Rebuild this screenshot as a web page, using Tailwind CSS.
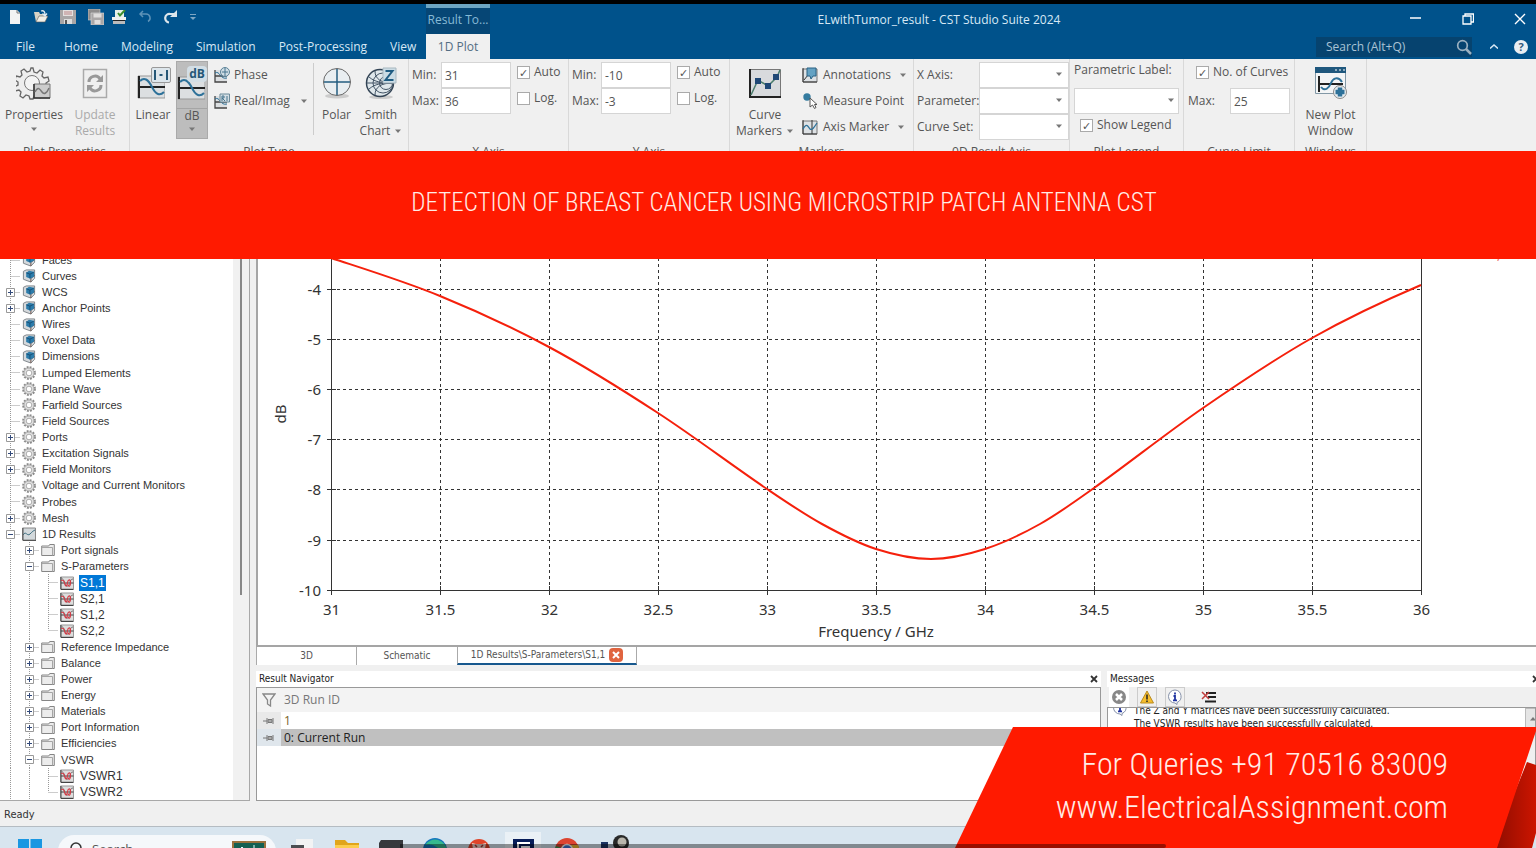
<!DOCTYPE html>
<html lang="en">
<head>
    <meta charset="UTF-8">
    <meta name="viewport" content="width=device-width, initial-scale=1.0">
    <title>ELwithTumor_result - CST Studio Suite 2024</title>
    <script src="https://cdn.jsdelivr.net/npm/@tailwindcss/browser@4"></script>
</head>
<body class="relative flex h-screen flex-col overflow-hidden bg-[#f0f0f0] font-['Open_Sans','Noto_Sans',sans-serif] text-xs text-[#555]">
    <!-- Shared icons -->
    <svg class="hidden">
        <symbol id="caret" viewBox="0 0 8 5"><path d="M1 .5h6L4 4z" fill="#777"/></symbol>
        <symbol id="cube" viewBox="0 0 14 15">
            <path d="M1 2.500l3-1.500h9v9l-4 4-8-3z" fill="#d5d9dc" stroke="#7b8186"/>
            <path d="M9 14v-4l4-3" fill="none" stroke="#6b4b42"/>
            <path d="M4 4l3-2 5.500 1v5l-4 2.500L4 8.500z" fill="#2c7cab"/>
            <path d="M4 4l4 1.500 4-2M8 5.500V10" fill="none" stroke="#174f75"/>
        </symbol>
        <symbol id="gear" viewBox="0 0 14 14">
            <circle cx="7" cy="7" r="6" fill="none" stroke="#8a8a8a" stroke-width="1.800" stroke-dasharray="1.900 1.240"/>
            <circle cx="7" cy="7" r="5" fill="#e2e2e2" stroke="#999" stroke-width=".8"/>
            <circle cx="7" cy="7" r="2.800" fill="#fff" stroke="#999" stroke-width=".8"/>
        </symbol>
        <symbol id="result" viewBox="0 0 14 14">
            <path d="M.5 1h13v12H.5z" fill="#d3d9dc" stroke="#888"/>
            <path d="M1 8c3-5 4 2 7-1s3-3 5-4" fill="none" stroke="#3d6e80"/>
            <path d="M1 1v12.500h13" fill="none" stroke="#555"/>
        </symbol>
        <symbol id="folder" viewBox="0 0 14 14">
            <path d="M.7 12.500V3h7l1-1.500h4.600v11z" fill="#ececec" stroke="#858585"/>
            <path d="M1 4.500h10.500v8" fill="none" stroke="#a5a5a5"/>
        </symbol>
        <symbol id="curve" viewBox="0 0 14 14">
            <path d="M.5 1h13v12H.5z" fill="#ddd" stroke="#999"/>
            <path d="M1 7h12.500M1 1v12.500h12.500" fill="none" stroke="#444"/>
            <path d="M1 3c4-2 3 9 7 7 3-1 1-7 5-7" fill="none" stroke="#777"/>
            <path d="M1 4.500c3-1 3 1 4 4s2 1 2.500-2 3-4 3 0-1.500 5-2.500 2" fill="none" stroke="#d33c46" stroke-width="1.200"/>
        </symbol>
        <symbol id="wave" viewBox="0 0 28 24">
            <path d="M1 1h27v22H1z" fill="#dcdfe1" stroke="#999"/>
            <path d="M2 1v22M2 12h26" stroke="#222" stroke-width="2" fill="none"/>
            <path d="M3 6c4-4 8-2 12 6s8 9 12 5" stroke="#2d7199" stroke-width="2" fill="none"/>
        </symbol>
        <symbol id="pin" viewBox="0 0 12 8"><path d="M0 4h4M4 1v6M5 2.500h4v3H5zM10 1v6" stroke="#777" fill="#aaa"/></symbol>
        <symbol id="info" viewBox="0 0 16 16">
            <path d="M8 1a6.500 6.500 0 1 0 0 13l2 1.500v-2A6.500 6.500 0 0 0 8 1z" fill="#fff" stroke="#8490a8"/>
            <path d="M8 3.500v2M6.500 7H8v4M6 11.300h4" stroke="#2034a0" stroke-width="1.800" fill="none"/>
        </symbol>
    </svg>

    <!-- Title bar and ribbon tabs -->
    <header class="shrink-0 border-t-4 border-black bg-[#00528b] text-[#d7e8f5]">
        <div class="flex h-[30px]">
            <div class="flex w-[426px] items-center gap-3 pb-1 pl-2">
                <button aria-label="New"><svg class="size-3.5" viewBox="0 0 14 14"><path d="M2 0h7l3 3v11H2z" fill="#f3f3f3"/><path d="M9 0v3h3" fill="none" stroke="#777"/></svg></button>
                <button aria-label="Open"><svg class="size-3.5" viewBox="0 0 14 14"><path d="M0 2h5l1 2h5v8H2z" fill="#d8d3c5"/><path d="M2 12l3-6h9l-3 6z" fill="#f3efe6" stroke="#555" stroke-width=".6"/><path d="M7 1c3-1 4 1 4 4M8.500 3.500L11 6l2-2.500" fill="none" stroke="#dfeaf2" stroke-width="1.300"/></svg></button>
                <button aria-label="Save"><svg class="size-4" viewBox="0 0 16 16"><path d="M0 1h16v14H0z" fill="#a9a6a6"/><path d="M3 1h10v6H3z" fill="#e4e0df"/><path d="M4 10h8v5H4z" fill="#ddd"/><path d="M4 3h8M4 5h8" stroke="#b88"/><path d="M6 11v4" stroke="#555" stroke-width="2"/></svg></button>
                <button aria-label="Save all"><svg class="size-4" viewBox="0 0 16 16"><path d="M0 0h12v11H0z" fill="#8f8d8d" stroke="#ccc" stroke-width=".6"/><path d="M3 4h13v12H3z" fill="#aaa7a7" stroke="#ddd" stroke-width=".6"/><path d="M5.500 4.500h8v4h-8zM6.500 11h6v4h-6z" fill="#e0dedd"/></svg></button>
                <button aria-label="Print" class="-ml-1"><svg class="size-3.5" viewBox="0 0 14 14"><path d="M3 0h9v7H3z" fill="#e8f0e8"/><path d="M0 7h14v3H0z" fill="#f0f0f0"/><path d="M1 11h12v3H1z" fill="#bbb"/><path d="M1 10.500h12" stroke="#222"/><path d="M6 3l2 2.500L13 0" stroke="#3c8c2e" stroke-width="2" fill="none"/></svg></button>
                <button aria-label="Undo"><svg class="size-3.5" viewBox="0 0 14 14"><path d="M5 1L2 4l3 3M2 4h6a4 4 0 0 1 2 7.500" fill="none" stroke="#5d93b8" stroke-width="1.500"/></svg></button>
                <button aria-label="Redo"><svg class="size-3.5" viewBox="0 0 14 14"><path d="M10 4H6a4 4 0 0 0-1 8.500" fill="none" stroke="#dce6ec" stroke-width="2.200"/><path d="M13 0v7H6z" fill="#dce6ec"/></svg></button>
                <button aria-label="Customize"><svg class="w-1.5" viewBox="0 0 6 8"><path d="M0 1.500h6" stroke="#7ea6c3"/><path d="M0 4h6L3 7z" fill="#7ea6c3"/></svg></button>
            </div>
            <div class="w-16 border-t-4 border-[#6da5c2] bg-[#064675] text-center leading-6 text-[#86bad6]">Result To...</div>
            <h1 class="flex-1 text-center leading-8">ELwithTumor_result - CST Studio Suite 2024</h1>
            <div class="flex w-[148px] items-center justify-end gap-10 pr-2.5">
                <button aria-label="Minimize"><svg class="size-3" viewBox="0 0 12 12"><path d="M0 5h11" stroke="#fff" stroke-width="1.500"/></svg></button>
                <button aria-label="Restore"><svg class="size-3" viewBox="0 0 12 12"><path d="M1 3h8v8H1zM3 3V1h8.500v8H9" fill="none" stroke="#fff" stroke-width="1.300"/></svg></button>
                <button aria-label="Close"><svg class="size-3" viewBox="0 0 12 12"><path d="M1 1l10 10M11 1L1 11" stroke="#fff" stroke-width="1.400"/></svg></button>
            </div>
        </div>
        <div class="flex h-[25px] items-center">
            <nav class="flex w-[426px] gap-[23px] pl-4 whitespace-nowrap">
                <a href="#">File</a><a class="ml-1.5" href="#">Home</a><a href="#">Modeling</a><a href="#">Simulation</a><a href="#">Post-Processing</a><a href="#">View</a>
            </nav>
            <a href="#" class="w-16 bg-[#f0f0f0] text-center leading-[25px] text-[#536d83]">1D Plot</a>
            <div class="flex flex-1 items-center justify-end">
                <label class="flex h-5 w-[156px] items-center bg-[#06436f] pl-1.5">
                    <input type="search" aria-label="Search" placeholder="Search (Alt+Q)" class="w-32 flex-1 bg-transparent pl-1 outline-none placeholder:text-[#a9c3d6]">
                    <svg class="size-4" viewBox="0 0 16 16"><circle cx="6.500" cy="6.500" r="4.800" fill="none" stroke="#9bb1c1" stroke-width="1.700"/><path d="M10 10l5 5" stroke="#9bb1c1" stroke-width="2.500"/></svg>
                </label>
                <button aria-label="Collapse ribbon" class="mr-4 ml-[18px]"><svg class="w-2" viewBox="0 0 8 5"><path d="M0 4.500L4 1l4 3.500" fill="none" stroke="#d7e8f5" stroke-width="1.500"/></svg></button>
                <button aria-label="Help" class="mr-2 size-3.5 rounded-full bg-[#e9eef2] text-[11px] leading-[14px] font-bold text-[#31597a]">?</button>
            </div>
        </div>
    </header>

    <!-- Ribbon -->
    <div class="flex h-[101px] shrink-0 whitespace-nowrap">
        <section class="flex w-[130px] flex-col border-r border-[#d9d9d9]">
            <div class="flex h-[86px] justify-between px-1.5 pt-1.5">
                <button class="flex w-14 flex-col items-center leading-4">
                    <svg class="mb-1.5 size-9" viewBox="0 0 36 36">
                        <path d="M17 3l1 4 3 1 3-3 3 2-1 4 2 2 4-1 1 4-3 2v3l3 2-1 3-4-1-2 3 1 3-3 2-3-3-3 1-1 3h-3l-1-3-3-1-3 3-3-2 1-4-2-2-4 1-1-4 4-2v-3l-3-2 1-4 4 1 2-2-1-4 3-2 3 3 3-1 1-3z" fill="#eee" stroke="#666" stroke-width="1.300"/>
                        <circle cx="16" cy="18" r="7.500" fill="#f4f4f4" stroke="#777"/>
                        <path d="M18 19h16v14H18z" fill="#ccc" stroke="#777"/><path d="M18 19v14h16" fill="none" stroke="#333" stroke-width="1.500"/><path d="M19 27c3-6 5-3 7 0s5 1 7-4" fill="none" stroke="#777" stroke-width="1.500"/>
                    </svg>
                    Properties<svg class="mt-1 w-2" viewBox="0 0 8 5"><use href="#caret"/></svg>
                </button>
                <button disabled class="flex w-14 flex-col items-center leading-4 text-[#aaa]">
                    <svg class="mb-1.5 size-9" viewBox="0 0 36 36">
                        <path d="M6.500 4.500h23v28h-23z" fill="#efefef" stroke="#aaa" stroke-width="1.500"/>
                        <path d="M12 17c0-6 8-8 11-3M24 20c0 6-8 8-11 3" fill="none" stroke="#999" stroke-width="3"/><path d="M26 10v7h-7zM10 27v-7h7z" fill="#999"/>
                    </svg>
                    Update<br>Results
                </button>
            </div>
            <p class="text-center leading-4">Plot Properties</p>
        </section>

        <section class="flex w-[279px] flex-col border-r border-[#d9d9d9]">
            <div class="flex h-[86px]">
                <button class="flex w-[46px] flex-col items-center pt-2 leading-4">
                    <span class="relative mb-1 block h-9 w-9">
                        <svg class="absolute bottom-1 left-0.5 h-6 w-7"><use href="#wave"/></svg>
                        <svg class="absolute top-0 right-0 h-4 w-5" viewBox="0 0 20 16"><rect x=".5" y=".5" width="19" height="15" rx="1.500" fill="#dde6ec" stroke="#999"/><path d="M4 3v10M16 3v10M8.500 8h3" stroke="#255777" stroke-width="2"/></svg>
                    </span>
                    Linear
                </button>
                <button class="mt-0.5 flex h-[78px] w-8 flex-col items-center self-start border border-[#aaa] bg-[#bdbdbd] pt-2 leading-4">
                    <span class="relative mb-1 block h-[34px] w-[30px]">
                        <svg class="absolute bottom-1 left-0 h-6 w-7"><use href="#wave"/></svg>
                        <span class="absolute -top-1 right-0 h-4 w-5 rounded-sm bg-[#d3dee5] text-center text-xs leading-4 font-bold text-[#255777]">dB</span>
                    </span>
                    <span class="w-full border-t border-[#a5a5a5] leading-[14px]">dB</span><svg class="mt-1 w-2" viewBox="0 0 8 5"><use href="#caret"/></svg>
                </button>
                <div class="flex w-[105px] flex-col gap-1 pt-[5px] pl-1.5">
                    <button class="flex h-[22px] items-center gap-1">
                        <svg class="size-4" viewBox="0 0 16 16"><path d="M1 3h12v12H1z" fill="#dcdfe1"/><path d="M1 3v12h12M1 9h12" stroke="#444" fill="none" stroke-width="1.300"/><path d="M1 6c5-3 5 7 12 5" stroke="#2d7199" fill="none"/><circle cx="11" cy="5" r="4.500" fill="#cfdde5" stroke="#5a8095"/><path d="M8 5h6M11 1v8" stroke="#46758e"/></svg>Phase
                    </button>
                    <button class="flex h-[22px] items-center gap-1">
                        <svg class="size-4 shrink-0" viewBox="0 0 16 16"><path d="M1 3h12v12H1z" fill="#dcdfe1"/><path d="M1 3v12h12M1 9h12" stroke="#444" fill="none" stroke-width="1.300"/><path d="M1 6c5-3 5 7 12 5" stroke="#2d7199" fill="none"/><path d="M6 1h9.500v8H6z" fill="#d3dde3" stroke="#6d8b9b"/><path d="M8 8V3h2v2H8l3 3M13 3v5" stroke="#46758e" fill="none"/></svg>Real/Imag
                        <svg class="ml-1.5 w-2 shrink-0" viewBox="0 0 8 5"><use href="#caret"/></svg>
                    </button>
                </div>
                <div class="mt-1 h-[72px] w-px bg-[#ccc]"></div>
                <button class="flex w-[45px] flex-col items-center pt-2 leading-4">
                    <svg class="mb-2 size-8" viewBox="0 0 32 32"><ellipse cx="16" cy="29" rx="12" ry="2.500" fill="#ccc"/><circle cx="16" cy="15" r="13.500" fill="#e9eef1" stroke="#666"/><path d="M16 2v26M3 15h26" stroke="#245d80" stroke-width="1.500"/></svg>
                    Polar
                </button>
                <button class="flex w-[44px] flex-col items-center pt-2 leading-4">
                    <svg class="mb-2 size-8" viewBox="0 0 32 32"><ellipse cx="16" cy="30" rx="12" ry="2" fill="#ccc"/><circle cx="15" cy="16" r="13.500" fill="#dfe7eb" stroke="#345" stroke-width="1.500"/><circle cx="18" cy="16" r="10" fill="none" stroke="#456"/><circle cx="21" cy="16" r="6.500" fill="none" stroke="#456"/><path d="M2 16h26M10 4c0 8 6 12 18 12M10 28c0-8 6-12 18-12M4 10c6 5 12 6 24 6M4 22c6-5 12-6 24-6" fill="none" stroke="#456"/><path d="M18 1h13v15H18z" fill="#cbdce5" stroke="#a9b8c0"/><path d="M20.500 4h7l-7 9h8" fill="none" stroke="#1f5c82" stroke-width="2"/></svg>
                    Smith
                    <span class="flex items-center gap-1">Chart<svg class="w-2" viewBox="0 0 8 5"><use href="#caret"/></svg></span>
                </button>
            </div>
            <p class="text-center leading-4">Plot Type</p>
        </section>

        <section class="flex w-[160px] flex-col border-r border-[#d9d9d9]">
            <div class="grid h-[86px] grid-cols-[27px_70px_1fr] content-start items-center gap-x-0.5 pt-[3px] pl-[3px]">
                <label for="xmin">Min:</label>
                <input id="xmin" value="31" class="h-[26px] w-full border border-[#d5d5d5] bg-white px-[3px]">
                <label class="mb-1.5 flex items-center gap-1 pl-1"><input type="checkbox" checked class="grid size-[13px] appearance-none place-items-center border border-[#aaa] bg-white checked:before:text-[11px] checked:before:leading-none checked:before:content-['✓']">Auto</label>
                <label for="xmax">Max:</label>
                <input id="xmax" value="36" class="h-[26px] w-full border border-[#d5d5d5] bg-white px-[3px]">
                <label class="mb-1.5 flex items-center gap-1 pl-1"><input type="checkbox" class="size-[13px] appearance-none border border-[#aaa] bg-white">Log.</label>
            </div>
            <p class="text-center leading-4">X Axis</p>
        </section>

        <section class="flex w-[161px] flex-col border-r border-[#d9d9d9]">
            <div class="grid h-[86px] grid-cols-[27px_70px_1fr] content-start items-center gap-x-0.5 pt-[3px] pl-[3px]">
                <label for="ymin">Min:</label>
                <input id="ymin" value="-10" class="h-[26px] w-full border border-[#d5d5d5] bg-white px-[3px]">
                <label class="mb-1.5 flex items-center gap-1 pl-1"><input type="checkbox" checked class="grid size-[13px] appearance-none place-items-center border border-[#aaa] bg-white checked:before:text-[11px] checked:before:leading-none checked:before:content-['✓']">Auto</label>
                <label for="ymax">Max:</label>
                <input id="ymax" value="-3" class="h-[26px] w-full border border-[#d5d5d5] bg-white px-[3px]">
                <label class="mb-1.5 flex items-center gap-1 pl-1"><input type="checkbox" class="size-[13px] appearance-none border border-[#aaa] bg-white">Log.</label>
            </div>
            <p class="text-center leading-4">Y Axis</p>
        </section>

        <section class="flex w-[184px] flex-col border-r border-[#d9d9d9]">
            <div class="flex h-[86px]">
                <button class="flex w-[70px] flex-col items-center pt-2 leading-4">
                    <svg class="mb-2 size-8" viewBox="0 0 32 32"><path d="M.5 2.500h31v27H.5z" fill="#d8dadd" stroke="#777"/><path d="M1 2v28h31" fill="none" stroke="#222" stroke-width="2"/><path d="M2 28L9 13l10 6 9-9 3-7" fill="none" stroke="#4a7c6c" stroke-width="1.500"/><path d="M6 11h6v6H6zM16 16h6v6h-6zM24 7h6v6h-6z" fill="#1f4876"/></svg>
                    Curve
                    <span class="flex items-center gap-1">Markers<svg class="w-2" viewBox="0 0 8 5"><use href="#caret"/></svg></span>
                </button>
                <div class="flex flex-1 flex-col gap-1 pt-[5px] pr-1.5 pl-0.5">
                    <button class="flex h-[22px] items-center gap-[5px]">
                        <svg class="size-4" viewBox="0 0 16 16"><path d="M1 2h14v13H1z" fill="#dde1e4" stroke="#777"/><path d="M1 1v14h14M2 13L6 8" fill="none" stroke="#333"/><path d="M5 1h9v8h-3l-2 3-1-3H5z" fill="#64a2c3" stroke="#2b6385"/></svg>Annotations<svg class="ml-auto w-2" viewBox="0 0 8 5"><use href="#caret"/></svg>
                    </button>
                    <button class="flex h-[22px] items-center gap-[5px]">
                        <svg class="size-4" viewBox="0 0 16 16"><circle cx="5" cy="4" r="3.700" fill="#357b9f"/><path d="M8 5v9l2.500-2 2 3.500 1.500-1-1.500-3H15z" fill="#fff" stroke="#555"/></svg>Measure Point
                    </button>
                    <button class="flex h-[22px] items-center gap-[5px]">
                        <svg class="size-4" viewBox="0 0 16 16"><path d="M1 2h14v13H1z" fill="#dde1e4" stroke="#777"/><path d="M1 1v14h14M10 1v14" fill="none" stroke="#333"/><path d="M1 10c4-7 5-2 7 0s5-3 7-6" fill="none" stroke="#2d7199" stroke-width="1.300"/></svg>Axis Marker<svg class="mr-0.5 ml-auto w-2" viewBox="0 0 8 5"><use href="#caret"/></svg>
                    </button>
                </div>
            </div>
            <p class="text-center leading-4">Markers</p>
        </section>

        <section class="flex w-[156px] flex-col border-r border-[#d9d9d9]">
            <div class="grid h-[86px] grid-cols-[1fr_90px] content-start items-center pt-[3px] pr-0.5 pl-[3px]">
                <label for="ax">X Axis:</label>
                <div class="relative"><select id="ax" class="block h-[26px] w-full appearance-none border border-[#d5d5d5] bg-white"></select><svg class="pointer-events-none absolute top-2.5 right-1.5 w-2" viewBox="0 0 8 5"><use href="#caret"/></svg></div>
                <label for="param">Parameter:</label>
                <div class="relative"><select id="param" class="block h-[26px] w-full appearance-none border border-[#d5d5d5] bg-white"></select><svg class="pointer-events-none absolute top-2.5 right-1.5 w-2" viewBox="0 0 8 5"><use href="#caret"/></svg></div>
                <label for="set">Curve Set:</label>
                <div class="relative"><select id="set" class="block h-[26px] w-full appearance-none border border-[#d5d5d5] bg-white"></select><svg class="pointer-events-none absolute top-2.5 right-1.5 w-2" viewBox="0 0 8 5"><use href="#caret"/></svg></div>
            </div>
            <p class="text-center leading-4">0D Result Axis</p>
        </section>

        <section class="flex w-[114px] flex-col border-r border-[#d9d9d9]">
            <div class="h-[86px] px-1 pt-[3px]">
                <label for="plabel" class="block leading-4">Parametric Label:</label>
                <div class="relative mt-2.5"><select id="plabel" class="block h-[26px] w-full appearance-none border border-[#d5d5d5] bg-white"></select><svg class="pointer-events-none absolute top-2.5 right-1 w-2" viewBox="0 0 8 5"><use href="#caret"/></svg></div>
                <label class="mt-[3px] flex items-center gap-1 pl-1.5 leading-4"><input type="checkbox" checked class="grid size-[13px] appearance-none place-items-center border border-[#aaa] bg-white checked:before:text-[11px] checked:before:leading-none checked:before:content-['✓']">Show Legend</label>
            </div>
            <p class="text-center leading-4">Plot Legend</p>
        </section>

        <section class="flex w-[111px] flex-col border-r border-[#d9d9d9]">
            <div class="h-[86px] px-1 pt-[5px]">
                <label class="flex items-center gap-1 pl-2 leading-4"><input type="checkbox" checked class="grid size-[13px] appearance-none place-items-center border border-[#aaa] bg-white checked:before:text-[11px] checked:before:leading-none checked:before:content-['✓']">No. of Curves</label>
                <div class="mt-2 flex items-center justify-between"><label for="cmax">Max:</label><input id="cmax" value="25" class="h-[26px] w-[60px] border border-[#d5d5d5] bg-white px-[3px]"></div>
            </div>
            <p class="text-center leading-4">Curve Limit</p>
        </section>

        <section class="flex w-[72px] flex-col border-r border-[#d9d9d9]">
            <button class="flex h-[86px] flex-col items-center pt-2 leading-4">
                <svg class="mb-2 size-8" viewBox="0 0 32 32"><path d="M.5.5h30v26H.500z" fill="#f3f5f6" stroke="#8298a6"/><path d="M0 0h31v6H0z" fill="#1f587e"/><path d="M20 3h2m2 0h2m2 0h2" stroke="#fff"/><path d="M4 9v16M4 17h24" stroke="#222" stroke-width="2"/><path d="M6 20c4 5 8 1 10-4s7-7 11-1" fill="none" stroke="#2d7199" stroke-width="2"/><circle cx="25" cy="25" r="6.500" fill="#e8eef1" stroke="#888"/><path d="M25 20.500v9M20.500 25h9" stroke="#2d7199" stroke-width="4.500"/></svg>
                New Plot<br>Window
            </button>
            <p class="text-center leading-4">Windows</p>
        </section>
    </div>

    <!-- Work area -->
    <main class="flex min-h-0 flex-1 gap-1.5">
        <aside class="flex w-[250px] border-r border-b border-[#a8a8a8] bg-white">
            <ul id="tree" class="flex h-[548px] flex-1 flex-col self-end overflow-hidden font-['Liberation_Sans',sans-serif] text-[11px] text-[#333]"></ul>
            <div class="flex w-4 justify-center bg-[#f1f1f1] pt-24"><div class="h-[339px] w-0.5 bg-[#888]"></div></div>
        </aside>

        <div class="flex min-w-0 flex-1 flex-col">
            <div class="min-h-0 flex-1 overflow-hidden border-b-2 border-l-2 border-[#a5a5a5] bg-white">
                <svg id="chart" class="block w-full font-['Noto_Sans','Open_Sans',sans-serif] text-[15px]" viewBox="258 160 1278 485" fill="#333"></svg>
            </div>
            <div class="flex h-[18px] shrink-0 bg-white font-['DejaVu_Sans_Condensed','DejaVu_Sans',sans-serif] text-[10px]">
                <button class="w-[101px] border-r border-l border-[#aaa] leading-4">3D</button>
                <button class="w-[100px] leading-4">Schematic</button>
                <div class="flex w-[180px] items-center justify-center gap-1 border-x border-b-2 border-x-[#aaa] border-b-[#17588e] whitespace-nowrap">
                    <button>1D Results\S-Parameters\S1,1</button>
                    <button aria-label="Close tab" class="grid size-3.5 shrink-0 place-items-center rounded-sm bg-[#e0643f]"><svg class="size-2" viewBox="0 0 8 8"><path d="M1 1l6 6M7 1L1 7" stroke="#fff" stroke-width="2"/></svg></button>
                </div>
            </div>
            <div class="flex h-[136px] shrink-0 gap-1.5 pt-1.5">
                <section class="flex flex-1 flex-col">
                    <div class="flex h-4 shrink-0 items-center justify-between bg-white px-[3px] font-['DejaVu_Sans_Condensed','DejaVu_Sans',sans-serif] text-[10px] text-[#222]">
                        <h2>Result Navigator</h2>
                        <button aria-label="Close Result Navigator"><svg class="size-2" viewBox="0 0 8 8"><path d="M1 1l6 6M7 1L1 7" stroke="#333" stroke-width="1.800"/></svg></button>
                    </div>
                    <div class="flex-1 border border-[#999] bg-white">
                        <table class="w-full text-left">
                            <thead><tr class="h-6 bg-[#f3f3f3] text-[#777]"><th class="w-6"><svg class="mx-auto size-3.5" viewBox="0 0 14 14"><path d="M1 1h12L8.500 7v6l-3-2V7z" fill="none" stroke="#888" stroke-width="1.300"/></svg></th><th class="pl-[3px] font-normal">3D Run ID</th></tr></thead>
                            <tbody class="leading-[17px]">
                                <tr><td class="bg-[#e9e9e9]"><svg class="mx-auto h-2 w-3"><use href="#pin"/></svg></td><td class="pl-[3px] text-[#7a6326]">1</td></tr>
                                <tr><td class="bg-[#dfe6ec]"><svg class="mx-auto h-2 w-3"><use href="#pin"/></svg></td><td class="bg-[#c0c0c0] pl-[3px] text-[#222]">0: Current Run</td></tr>
                            </tbody>
                        </table>
                    </div>
                </section>
                <section class="flex w-[429px] flex-col font-['DejaVu_Sans_Condensed','DejaVu_Sans',sans-serif] text-[10px] text-[#222]">
                    <div class="flex h-4 shrink-0 items-center justify-between bg-white pl-[3px]">
                        <h2>Messages</h2>
                        <button aria-label="Close Messages" class="w-1 overflow-hidden"><svg class="size-2" viewBox="0 0 8 8"><path d="M1 1l6 6M7 1L1 7" stroke="#333" stroke-width="1.800"/></svg></button>
                    </div>
                    <div class="flex h-5 shrink-0 items-center gap-2 pl-0.5">
                        <button aria-label="Errors" class="grid h-5 w-5 place-items-center bg-white"><svg class="size-4" viewBox="0 0 16 16"><circle cx="8" cy="8" r="7" fill="#888"/><path d="M5 5l6 6M11 5l-6 6" stroke="#fff" stroke-width="2.500"/></svg></button>
                        <button aria-label="Warnings" class="grid h-5 w-5 place-items-center border border-[#ccc]"><svg class="size-4" viewBox="0 0 16 16"><path d="M8 2l6.500 12h-13z" fill="#f5bd2d" stroke="#b98b20"/><path d="M8 5.500v5M8 11.500v1.500" stroke="#222" stroke-width="1.500"/></svg></button>
                        <button aria-label="Info" class="grid h-5 w-5 place-items-center border border-[#ccc]"><svg class="size-4"><use href="#info"/></svg></button>
                        <button aria-label="Clear messages" class="ml-2"><svg class="h-3 w-4" viewBox="0 0 16 12"><path d="M5 2h10M7 6h8M4 10.500h11" stroke="#222" stroke-width="1.800"/><path d="M1 1l7 7M8 1L1 8" stroke="#c33d3d" stroke-width="1.500"/></svg></button>
                    </div>
                    <div class="flex flex-1 overflow-hidden border border-[#999] bg-white leading-[13px]">
                        <svg class="-mt-2 ml-1 size-4"><use href="#info"/></svg>
                        <div class="-mt-1 flex-1 pl-1.5"><p>The Z and Y matrices have been successfully calculated.</p><p>The VSWR results have been successfully calculated.</p></div>
                        <div class="w-2.5 bg-[#f0f0f0]"><button aria-label="Scroll up" class="grid h-5 w-4 place-items-center border border-[#bbb] bg-[#e5e5e5]"><svg class="w-2 rotate-180" viewBox="0 0 8 5"><use href="#caret"/></svg></button></div>
                    </div>
                </section>
            </div>
        </div>
    </main>

    <footer class="h-[26px] shrink-0 border-b border-[#b5bcc2] px-1 font-['DejaVu_Sans_Condensed','DejaVu_Sans',sans-serif] text-[11px] leading-7 text-[#333]">Ready</footer>

    <!-- Taskbar, running off the bottom of the screen -->
    <div class="flex h-[21px] shrink-0 items-start gap-3 overflow-hidden bg-[#d8e5ef] pl-[18px]">
        <button aria-label="Start" class="mt-3 mr-1"><svg class="size-6" viewBox="0 0 24 24"><path d="M0 0h11v11H0zM12.500 0h11.500v11H12.500zM0 12.500h11V24H0zM12.500 12.500H24V24H12.500z" fill="#1997e2"/></svg></button>
        <label class="mt-2 flex h-8 w-[218px] items-start rounded-full bg-[#f5f8fb] pr-2.5 pl-2.5">
            <svg class="mt-1.5 size-4 shrink-0" viewBox="0 0 16 16"><circle cx="8" cy="7" r="5" fill="none" stroke="#333" stroke-width="1.500"/><path d="M4 11l-3 4" stroke="#333" stroke-width="1.500"/></svg>
            <input type="search" aria-label="Search Windows" placeholder="Search" class="mt-1.5 ml-2 w-24 flex-1 bg-transparent text-[13px] leading-4 outline-none placeholder:text-[#555]">
            <svg class="mt-1.5 h-6 w-[34px] shrink-0" viewBox="0 0 34 24"><path d="M1 1h32v24H1z" fill="#146052" stroke="#99713d" stroke-width="2"/><path d="M7 9l3-3 3 3M22 4v5" stroke="#dff" fill="none"/></svg>
        </label>
        <div class="flex gap-4 pt-[11px] pl-px">
            <button aria-label="Task view"><svg class="size-7" viewBox="0 0 28 28"><path d="M7 1h17v18H7z" fill="#f2f3f4"/><path d="M2 7h13v14H2z" fill="#4b4e52"/></svg></button>
            <button aria-label="Explorer"><svg class="size-7" viewBox="0 0 28 28"><path d="M2 2h10l3 3h11v18H2z" fill="#e0a51b"/><path d="M2 7h24v16H2z" fill="#fccd4d"/></svg></button>
            <button aria-label="Terminal"><svg class="size-7" viewBox="0 0 28 28"><path d="M4 2h22v20H2V5z" fill="#37393d"/></svg></button>
            <button aria-label="Edge"><svg class="size-7" viewBox="0 0 28 28"><circle cx="14" cy="12" r="12" fill="#1577bd"/><path d="M4 7a12 12 0 0 1 22 6c-4 3-9 0-9-3-5-4-9-4-13-3z" fill="#36b98e"/></svg></button>
            <button aria-label="Mail"><svg class="size-7" viewBox="0 0 28 28"><circle cx="14" cy="12" r="11" fill="#df4429"/><path d="M7 5l4 1h6l4-1-1 6H8z" fill="#f5d6cc"/><path d="M10 7l2 2M18 7l-2 2" stroke="#a33" stroke-width="1.500"/></svg></button>
            <button aria-label="CST Studio Suite" class="-mt-1.5 -ml-1 bg-[#eaf1f6] px-1 pt-1.5"><svg class="size-7" viewBox="0 0 28 28"><path d="M4 1h21v22H4z" fill="#071d59"/><path d="M21 5H9v12h12M21 9h-8v8" stroke="#fff" stroke-width="2" fill="none"/></svg></button>
            <button aria-label="Chrome" class="-ml-1"><svg class="size-7" viewBox="0 0 28 28"><circle cx="14" cy="12" r="12" fill="#dc4430"/><path d="M3 8a12 12 0 0 0 8 16l3-12z" fill="#3a9c50"/><path d="M14 7h11a12 12 0 0 1-9 17z" fill="#f4be34"/><circle cx="14" cy="12" r="5.500" fill="#3c78d8" stroke="#fff" stroke-width="1.500"/></svg></button>
            <button aria-label="Recorder" class="-mt-1.5"><svg class="h-7 w-8" viewBox="0 0 32 28"><path d="M4 7h7v21H4z" fill="#1b3362"/><path d="M11 9h15v16H11z" fill="#b4c0cf"/><circle cx="24" cy="8" r="8" fill="#292929"/><circle cx="25" cy="7" r="4.500" fill="#b9b6ac"/></svg></button>
        </div>
    </div>

    <!-- Video overlays -->
    <div class="absolute inset-x-0 top-[151px] flex h-[108px] items-center justify-center bg-[#ff1a00] pb-1 pl-8 font-['Roboto_Condensed','Open_Sans_Condensed','Noto_Sans_Condensed','Roboto',sans-serif] text-[25px] font-light text-[#ffece6]">DETECTION OF BREAST CANCER USING MICROSTRIP PATCH ANTENNA CST</div>
    <div class="absolute right-0 bottom-0 flex h-[121px] w-[581px] flex-col items-end pt-4 pr-[88px] font-['Roboto_Condensed','Open_Sans_Condensed','Noto_Sans_Condensed','Roboto',sans-serif] text-[32px] leading-[43px] font-light text-[#ffece6]">
        <svg class="absolute inset-0 h-full w-full" viewBox="0 0 581 121">
            <defs><linearGradient id="fold"><stop offset="0" stop-color="#8b0c00"/><stop offset="1" stop-color="#cc1500"/></linearGradient></defs>
            <path d="M572 35l9 3v68l-4 15h-40z" fill="url(#fold)"/>
            <path d="M58 0h523v4l-39 117H0z" fill="#ff1a00"/>
        </svg>
        <p class="relative">For Queries +91 70516 83009</p>
        <p class="relative">www.ElectricalAssignment.com</p>
    </div>
    <div class="absolute bottom-0 left-[400px] h-1 w-[766px] rounded-r-full bg-black/40"></div>

    <script>
        // [level, icon, label, expander, last child]
        const nodes = [
            [0, 'cube', 'Faces'], [0, 'cube', 'Curves'], [0, 'cube', 'WCS', '+'], [0, 'cube', 'Anchor Points', '+'],
            [0, 'cube', 'Wires'], [0, 'cube', 'Voxel Data'], [0, 'cube', 'Dimensions'], [0, 'gear', 'Lumped Elements'],
            [0, 'gear', 'Plane Wave'], [0, 'gear', 'Farfield Sources'], [0, 'gear', 'Field Sources'], [0, 'gear', 'Ports', '+'],
            [0, 'gear', 'Excitation Signals', '+'], [0, 'gear', 'Field Monitors', '+'], [0, 'gear', 'Voltage and Current Monitors'],
            [0, 'gear', 'Probes'], [0, 'gear', 'Mesh', '+'], [0, 'result', '1D Results', '-'],
            [1, 'folder', 'Port signals', '+'], [1, 'folder', 'S-Parameters', '-'],
            [2, 'curve', 'S1,1'], [2, 'curve', 'S2,1'], [2, 'curve', 'S1,2'], [2, 'curve', 'S2,2', '', true],
            [1, 'folder', 'Reference Impedance', '+'], [1, 'folder', 'Balance', '+'], [1, 'folder', 'Power', '+'],
            [1, 'folder', 'Energy', '+'], [1, 'folder', 'Materials', '+'], [1, 'folder', 'Port Information', '+'],
            [1, 'folder', 'Efficiencies', '+'], [1, 'folder', 'VSWR', '-'],
            [2, 'curve', 'VSWR1'], [2, 'curve', 'VSWR2', '', true]
        ];
        document.getElementById('tree').innerHTML = nodes.map(([level, icon, label, expander, last]) => {
            let guides = '';
            for (let i = 0; i <= level; i++) {
                const own = i === level;
                let d = `M9.5 0V${own && last ? 8 : 17}` + (own ? 'M9.5 8.5H19' : '');
                guides += `<svg class="h-[17px] w-[19px] shrink-0" viewBox="0 0 19 17"><path d="${d}" stroke="#999" stroke-dasharray="1 1" fill="none"/>`;
                if (own && expander) {
                    guides += `<path d="M5.500 4.500h8v8h-8z" fill="#fff" stroke="#999"/><path d="M7 8.500h5${expander === '+' ? 'M9.500 6v5' : ''}" stroke="#334a7a"/>`;
                }
                guides += '</svg>';
            }
            const text = label === 'S1,1' ? 'bg-[#0078d7] text-white px-px leading-4 text-xs' : level === 2 ? 'px-px text-xs' : 'px-px';
            return `<li class="flex min-h-0 flex-1 items-center whitespace-nowrap pl-px">${guides}<svg class="ml-0.5 mr-[5px] size-3.5 shrink-0"><use href="#${icon}"/></svg><span class="${text}">${label}</span></li>`;
        }).join('');

        const px = f => 331 + (f - 31) * 218;
        const py = v => 289 - (v + 4) * 50.2;
        let out = '';
        for (let f = 31; f <= 36; f += 0.5) {
            const x = px(f) + 0.5;
            if (f > 31 && f < 36) out += `<path d="M${x} 240V590" stroke="#333" stroke-dasharray="3 3"/>`;
            out += `<path d="M${x} 586v9" stroke="#333"/><text x="${x}" y="615" text-anchor="middle">${f}</text>`;
        }
        for (let v = -4; v >= -10; v--) {
            const y = Math.floor(py(v)) + 0.5;
            if (v > -10) out += `<path d="M331 ${y}H1421" stroke="#333" stroke-dasharray="3 3"/>`;
            out += `<path d="M327 ${y}h9" stroke="#333"/><text x="321" y="${y + 5}" text-anchor="end">${v}</text>`;
        }
        out += '<path d="M331.500 240V590.500H1421.500V240" fill="none" stroke="#333"/>';
        out += '<text x="876" y="637" text-anchor="middle">Frequency / GHz</text><text transform="translate(286 414) rotate(-90)" text-anchor="middle">dB</text>';
        out += '<text x="1480" y="259" fill="#e77">S1,1</text>';

        // S1,1 curve, smoothed through its sample points
        const pts = [[276, 242], [331, 258], [440, 296], [549, 347], [658, 413], [767, 489], [822, 524], [876, 549], [931, 559], [985, 549], [1040, 524], [1094, 488], [1203, 408], [1312, 338], [1421, 285], [1530, 245]];
        let d = `M${pts[1]}`;
        for (let i = 1; i < pts.length - 2; i++) {
            const [a, b, c, e] = [pts[i - 1], pts[i], pts[i + 1], pts[i + 2]];
            const w = c[0] - b[0];
            const m1 = (c[1] - a[1]) / (c[0] - a[0]);
            const m2 = (e[1] - b[1]) / (e[0] - b[0]);
            d += `C${b[0] + w / 3} ${b[1] + m1 * w / 3} ${c[0] - w / 3} ${c[1] - m2 * w / 3} ${c}`;
        }
        out += `<path d="${d}" fill="none" stroke="#f5200c" stroke-width="2"/>`;
        document.getElementById('chart').innerHTML = out;
    </script>
</body>
</html>
